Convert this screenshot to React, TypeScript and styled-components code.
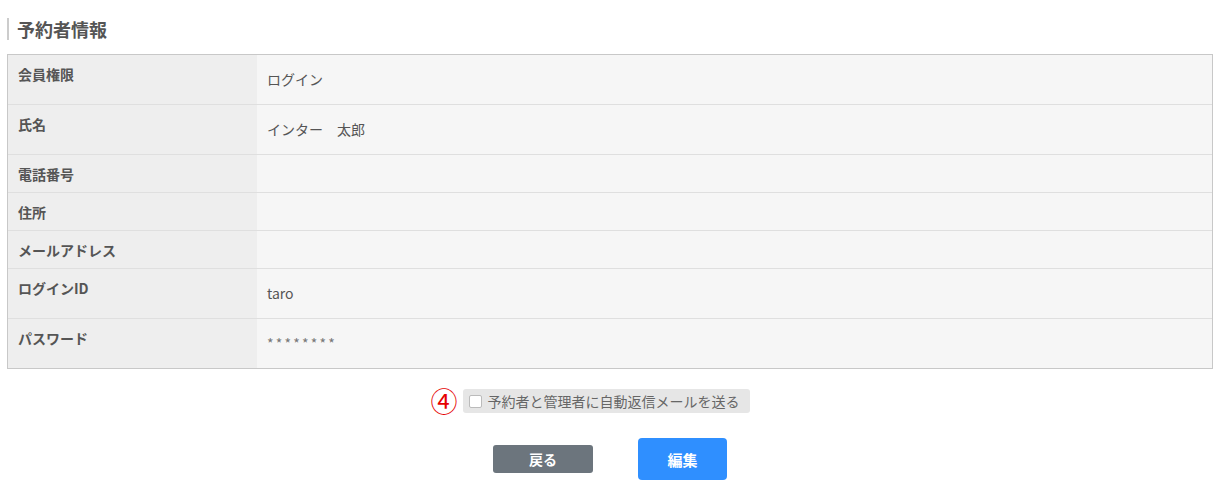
import styled, { createGlobalStyle } from "styled-components";

const GlobalStyle = createGlobalStyle`
  body {
    margin: 0;
    background: #fff;
    font-family: "Noto Sans CJK JP", "Noto Sans", sans-serif;
    color: #555;
  }
`;

const rows: { label: string; value: string }[] = [
  { label: "会員権限", value: "ログイン" },
  { label: "氏名", value: "インター　太郎" },
  { label: "電話番号", value: "" },
  { label: "住所", value: "" },
  { label: "メールアドレス", value: "" },
  { label: "ログインID", value: "taro" },
  { label: "パスワード", value: "********" },
];

const App = () => {
  return (
    <>
      <GlobalStyle />
      <Page>
        <Heading>予約者情報</Heading>
        <Table>
          {rows.map((row) => (
            <Row key={row.label}>
              <Label>{row.label}</Label>
              <Value $secret={row.label === "パスワード"}>{row.value}</Value>
            </Row>
          ))}
        </Table>
        <MailOption>
          <Circled>④</Circled>
          <CheckLabel>
            <Check type="checkbox" />
            予約者と管理者に自動返信メールを送る
          </CheckLabel>
        </MailOption>
        <Actions>
          <BackButton>戻る</BackButton>
          <EditButton>編集</EditButton>
        </Actions>
      </Page>
    </>
  );
};

export default App;

const Page = styled.div`
  padding: 18px 10px 0 7px;
`;

const Heading = styled.h2`
  margin: 0 0 14px 0;
  padding-left: 8px;
  border-left: 2px solid #ccc;
  font-size: 18px;
  line-height: 22px;
  font-weight: bold;
  color: #555;
`;

const Table = styled.div`
  border: 1px solid #c8c8c8;
`;

const Row = styled.div`
  display: grid;
  grid-template-columns: 249px 1fr;
  border-top: 1px solid #dfdfdf;

  &:first-child {
    border-top: none;
  }
`;

const Label = styled.div`
  background: #eeeeee;
  padding: 10px 10px 9px;
  font-size: 14px;
  line-height: 18px;
  font-weight: bold;
  color: #555;
`;

const Value = styled.div<{ $secret?: boolean }>`
  background: #f6f6f6;
  padding: 15px 10px;
  font-size: 14px;
  line-height: 19px;
  color: ${(p) => (p.$secret ? "#777" : "#555")};
  letter-spacing: ${(p) => (p.$secret ? "2.2px" : "0")};
  display: flex;
  align-items: center;

  &:empty {
    padding: 0;
  }
`;

const MailOption = styled.div`
  display: flex;
  justify-content: center;
  align-items: center;
  gap: 5px;
  margin-top: 20px;
  padding-right: 40px;
`;

const Circled = styled.span`
  color: #e60000;
  font-size: 27px;
  line-height: 24px;
`;

const CheckLabel = styled.label`
  display: flex;
  align-items: center;
  gap: 6px;
  height: 24px;
  padding: 0 10px 0 6px;
  background: #e6e6e6;
  border-radius: 3px;
  font-size: 14px;
  color: #666;
`;

const Check = styled.input`
  appearance: none;
  width: 13px;
  height: 13px;
  margin: 0;
  background: #fff;
  border: 1px solid #bbb;
  border-radius: 2px;
`;

const Actions = styled.div`
  display: flex;
  justify-content: center;
  align-items: center;
  gap: 45px;
  margin-top: 25px;
`;

const BackButton = styled.button`
  width: 100px;
  height: 28px;
  border: none;
  border-radius: 3px;
  background: #6c757d;
  color: #fff;
  font-family: inherit;
  font-size: 14px;
  font-weight: bold;
`;

const EditButton = styled.button`
  width: 89px;
  height: 42px;
  border: none;
  border-radius: 4px;
  background: #2f8fff;
  color: #fff;
  font-family: inherit;
  font-size: 15px;
  font-weight: bold;
`;
